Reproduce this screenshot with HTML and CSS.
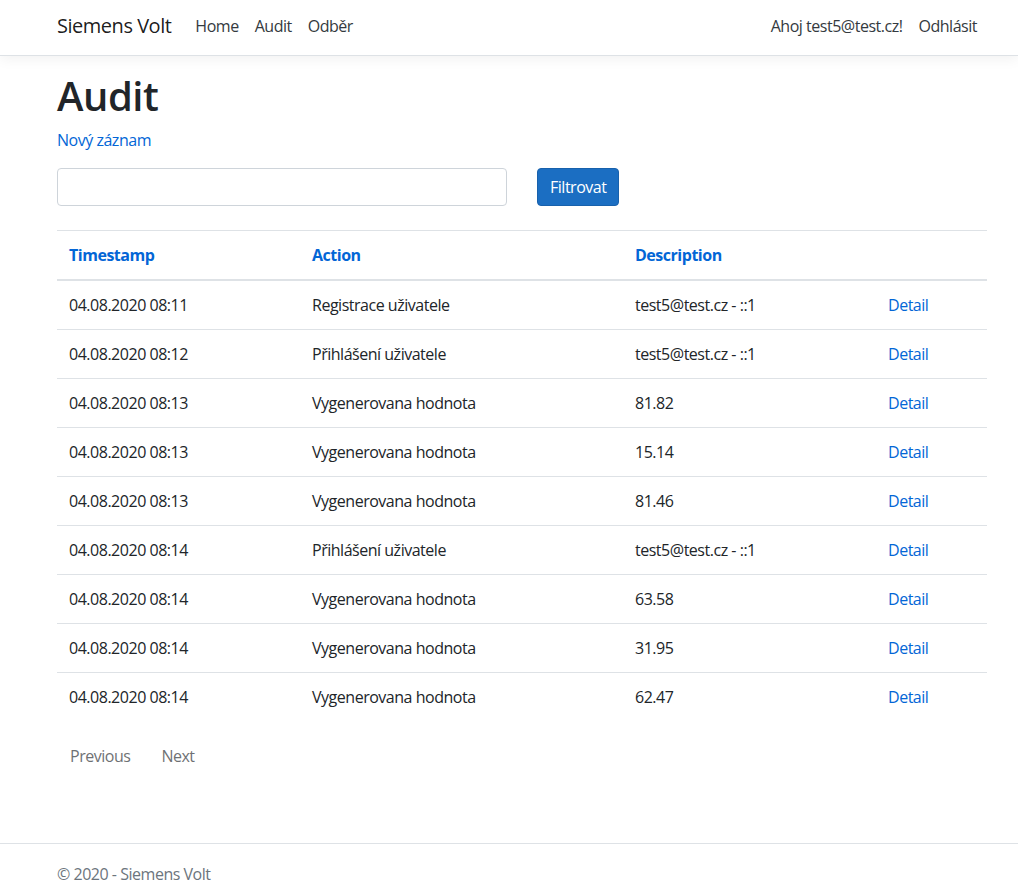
FILE: index.html
```html
<!DOCTYPE html>
<html lang="cs">
<head>
<meta charset="utf-8">
<title>Audit - Siemens Volt</title>
<link rel="stylesheet" href="styles.css">
</head>
<body>
<div class="page">
  <header class="navbar">
    <div class="container nav-inner">
      <a class="brand" href="#">Siemens Volt</a>
      <ul class="nav nav-main">
        <li><a class="nav-link" href="#">Home</a></li>
        <li><a class="nav-link" href="#">Audit</a></li>
        <li><a class="nav-link" href="#">Odběr</a></li>
      </ul>
      <ul class="nav nav-user">
        <li><a class="nav-link" href="#">Ahoj test5@test.cz!</a></li>
        <li><a class="nav-link" href="#">Odhlásit</a></li>
      </ul>
    </div>
  </header>

  <main class="container main">
    <h1 class="title">Audit</h1>
    <p class="new-link"><a href="#">Nový záznam</a></p>
    <form class="filter">
      <input class="filter-input" type="text">
      <button class="btn-primary" type="button">Filtrovat</button>
    </form>

    <table class="table">
      <thead>
        <tr>
          <th class="c1"><a href="#">Timestamp</a></th>
          <th class="c2"><a href="#">Action</a></th>
          <th class="c3"><a href="#">Description</a></th>
          <th class="c4"></th>
        </tr>
      </thead>
      <tbody>
        <tr><td>04.08.2020 08:11</td><td>Registrace uživatele</td><td>test5@test.cz - ::1</td><td><a href="#">Detail</a></td></tr>
        <tr><td>04.08.2020 08:12</td><td>Přihlášení uživatele</td><td>test5@test.cz - ::1</td><td><a href="#">Detail</a></td></tr>
        <tr><td>04.08.2020 08:13</td><td>Vygenerovana hodnota</td><td>81.82</td><td><a href="#">Detail</a></td></tr>
        <tr><td>04.08.2020 08:13</td><td>Vygenerovana hodnota</td><td>15.14</td><td><a href="#">Detail</a></td></tr>
        <tr><td>04.08.2020 08:13</td><td>Vygenerovana hodnota</td><td>81.46</td><td><a href="#">Detail</a></td></tr>
        <tr><td>04.08.2020 08:14</td><td>Přihlášení uživatele</td><td>test5@test.cz - ::1</td><td><a href="#">Detail</a></td></tr>
        <tr><td>04.08.2020 08:14</td><td>Vygenerovana hodnota</td><td>63.58</td><td><a href="#">Detail</a></td></tr>
        <tr><td>04.08.2020 08:14</td><td>Vygenerovana hodnota</td><td>31.95</td><td><a href="#">Detail</a></td></tr>
        <tr><td>04.08.2020 08:14</td><td>Vygenerovana hodnota</td><td>62.47</td><td><a href="#">Detail</a></td></tr>
      </tbody>
    </table>

    <div class="pager">
      <a class="btn-disabled" href="#">Previous</a>
      <a class="btn-disabled" href="#">Next</a>
    </div>
  </main>
</div>

<footer class="footer">
  <div class="container">© 2020 - Siemens Volt</div>
</footer>
</body>
</html>
```

FILE: styles.css
```css
* { box-sizing: border-box; }

html, body {
  margin: 0;
  padding: 0;
}

body {
  font-family: "Segoe UI", "Open Sans", "Noto Sans", sans-serif;
  font-size: 16px;
  line-height: 1.5;
  letter-spacing: -0.03em;
  color: #212529;
  background: #fff;
}

a {
  color: #0366d6;
  text-decoration: none;
}

.page {
  min-height: 843px;
}

.container {
  width: 960px;
  margin-left: 42px;
  padding: 0 15px;
}

/* Navbar */
.navbar {
  background: #fff;
  border-bottom: 1px solid #dee2e6;
  box-shadow: 0 4px 12px rgba(0, 0, 0, 0.05);
  height: 56px;
  margin-bottom: 16px;
}

.nav-inner {
  display: flex;
  align-items: center;
  height: 55px;
  padding-bottom: 4px;
}

.brand {
  font-size: 20px;
  color: rgba(0, 0, 0, 0.9);
  margin-right: 16px;
  line-height: 30px;
}

.nav {
  list-style: none;
  margin: 0;
  padding: 0;
  display: flex;
}

.nav-main {
  flex: 1;
}

.nav-user {
  margin-right: 2px;
}

.nav-link {
  display: block;
  padding: 8px;
  color: #343a40;
}

/* Main */
.main {
  padding-bottom: 16px;
}

.title {
  font-size: 40px;
  font-weight: 600;
  line-height: 1.2;
  margin: 0 0 8px 0;
}

.new-link {
  margin: 0 0 16px 0;
}

.filter {
  display: flex;
  align-items: center;
  margin-bottom: 24px;
}

.filter-input {
  width: 450px;
  height: 38px;
  border: 1px solid #ced4da;
  border-radius: 4px;
  padding: 6px 12px;
  font: inherit;
  margin-right: 30px;
}

.btn-primary {
  height: 38px;
  padding: 6px 12px;
  font: inherit;
  letter-spacing: inherit;
  color: #fff;
  background: #1b6ec2;
  border: 1px solid #1861ac;
  border-radius: 4px;
}

/* Table */
.table {
  width: 930px;
  border-collapse: collapse;
  margin-bottom: 16px;
}

.table th,
.table td {
  padding: 12px;
  text-align: left;
  vertical-align: top;
  border-top: 1px solid #dee2e6;
  line-height: 24px;
}

.table th {
  font-weight: 700;
  border-bottom: 2px solid #dee2e6;
}

.c1 { width: 243px; }
.c2 { width: 323px; }
.c3 { width: 253px; }
.c4 { width: 111px; }

/* Pager */
.pager {
  display: flex;
  gap: 5px;
}

.btn-disabled {
  display: inline-block;
  padding: 6px 12px;
  border: 1px solid transparent;
  line-height: 24px;
  color: #212529;
  opacity: 0.65;
}

/* Footer */
.footer {
  border-top: 1px solid #dee2e6;
  line-height: 60px;
  color: #6c757d;
  white-space: nowrap;
}
```
